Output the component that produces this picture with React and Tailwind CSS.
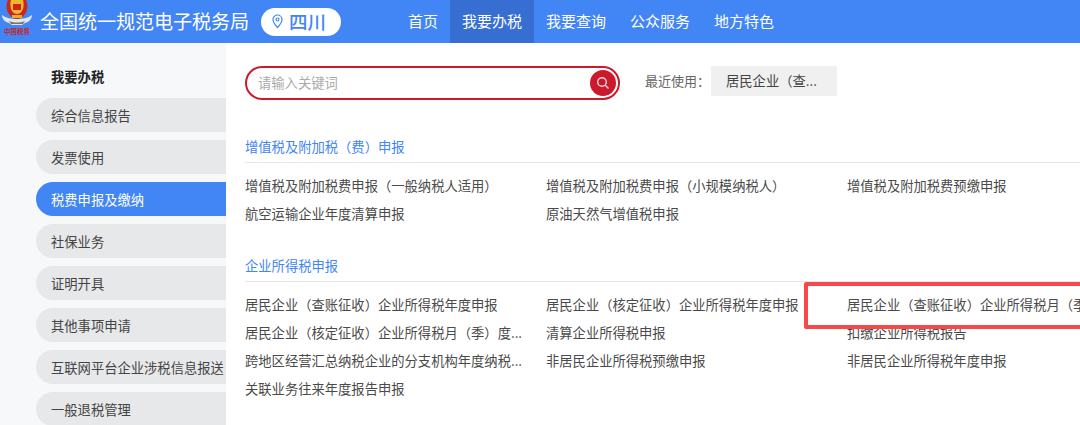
const font = "font-['Noto_Sans_CJK_SC','Noto_Sans',sans-serif]"

const navItems = ['首页', '我要办税', '我要查询', '公众服务', '地方特色']
const sideItems = ['综合信息报告', '发票使用', '税费申报及缴纳', '社保业务', '证明开具', '其他事项申请', '互联网平台企业涉税信息报送', '一般退税管理']

const sections = [
  {
    title: '增值税及附加税（费）申报',
    links: [
      '增值税及附加税费申报（一般纳税人适用）',
      '增值税及附加税费申报（小规模纳税人）',
      '增值税及附加税费预缴申报',
      '航空运输企业年度清算申报',
      '原油天然气增值税申报',
    ],
  },
  {
    title: '企业所得税申报',
    links: [
      '居民企业（查账征收）企业所得税年度申报',
      '居民企业（核定征收）企业所得税年度申报',
      '居民企业（查账征收）企业所得税月（季）度申报',
      '居民企业（核定征收）企业所得税月（季）度...',
      '清算企业所得税申报',
      '扣缴企业所得税报告',
      '跨地区经营汇总纳税企业的分支机构年度纳税...',
      '非居民企业所得税预缴申报',
      '非居民企业所得税年度申报',
      '关联业务往来年度报告申报',
    ],
  },
]

function Emblem() {
  return (
    <svg width="32" height="27" viewBox="0 0 32 27" className="block">
      {/* wings */}
      <path d="M1 15c4 3 9 4 15 4s11-1 15-4c0 4-3 7-7 8l-3 2H11l-3-2c-4-1-7-4-7-8z" fill="#e4e6e4" />
      <path d="M8 21c5 2 11 2 16 0l-2 3H10z" fill="#6f7478" />
      {/* red shield */}
      <path d="M7 0h18c2 4 2 10-1 14-2 3-5 5-8 5s-6-2-8-5C5 10 5 4 7 0z" fill="#c9261c" />
      <path d="M10 0h12c1 3 1 8-1 11-1 2-3 3-5 3s-4-1-5-3C9 8 9 3 10 0z" fill="#efb52f" />
      <rect x="12" y="4" width="8" height="6" fill="#c9261c" />
      <rect x="11" y="15" width="10" height="3" fill="#e6ae2e" />
    </svg>
  )
}

function App() {
  return (
    <div className={`relative h-[425px] w-[1080px] overflow-hidden bg-white ${font}`}>
      <header className="flex h-[43px] items-center bg-[#4285f4]">
        <div className="ml-[1px] flex h-full w-[39px] flex-col self-start">
          <Emblem />
          <div className="ml-[3px] mt-[1px] whitespace-nowrap text-[6.500px] font-bold leading-[7px] text-[#c9261c]">中国税务</div>
        </div>
        <div className="text-[19.100px] leading-none tracking-[-0.1px] text-white">全国统一规范电子税务局</div>
        <div className="ml-[12px] flex h-[28px] w-[80px] items-center rounded-full bg-white pl-[10px] text-[#4285f4]">
          <svg width="13" height="15" viewBox="0 0 13 15" fill="none" stroke="currentColor" strokeWidth="1.200">
            <path d="M6.500 1a4.500 4.500 0 0 1 4.500 4.500c0 3.200-4.500 8-4.500 8S2 8.700 2 5.500A4.500 4.500 0 0 1 6.500 1z" />
            <circle cx="6.500" cy="5.500" r="1.500" />
          </svg>
          <span className="ml-[5px] text-[18.500px] font-medium leading-none">四川</span>
        </div>
        <nav className="ml-[55px] flex h-full">
          {navItems.map((item) => (
            <div key={item} className={`flex h-full items-center px-[12px] text-[15px] text-white ${item === '我要办税' ? 'bg-[#366fd1]' : ''}`}>
              {item}
            </div>
          ))}
        </nav>
      </header>

      <div className="flex h-[382px]">
        <aside className="w-[226px] shrink-0 bg-[#f7f8fa] pl-[36px] pt-[25px]">
          <div className="pl-[15px] text-[13.300px] font-bold leading-[18px] text-[#222]">我要办税</div>
          <ul className="mt-[12px] flex flex-col gap-[8px]">
            {sideItems.map((item) => (
              <li
                key={item}
                className={`flex h-[34px] items-center whitespace-nowrap rounded-l-full pl-[15px] pt-px text-[13.300px] ${item === '税费申报及缴纳' ? 'bg-[#4285f4] text-white' : 'bg-[#e7e8ea] text-[#444]'}`}
              >
                {item}
              </li>
            ))}
          </ul>
        </aside>

        <main className="min-w-0 flex-1 overflow-hidden pl-[19px] pt-[23px]">
          <div className="flex h-[34px] items-center">
            <div className="flex h-[34px] w-[375px] items-center justify-between rounded-full border-2 border-[#cc1a2c] pl-[11px] pr-[2px]">
              <span className="text-[13.300px] leading-none text-[#aaa]">请输入关键词</span>
              <span className="flex h-[26px] w-[26px] items-center justify-center rounded-full bg-[#cc1a2c]">
                <svg width="14" height="14" viewBox="0 0 14 14" fill="none" stroke="#f5d5d8" strokeWidth="1.400">
                  <circle cx="6" cy="6" r="4.300" />
                  <path d="M9.200 9.200 12.500 12.500" />
                </svg>
              </span>
            </div>
            <span className="mb-[5px] ml-[25px] text-[13px] leading-none text-[#666]">最近使用：</span>
            <span className="mb-[4px] ml-[1px] flex h-[30px] w-[126px] items-center bg-[#f0f0f0] pl-[15px] text-[13.300px] text-[#444]">居民企业（查...</span>
          </div>

          <div className="mt-[38px] flex flex-col gap-[28px]">
            {sections.map((section) => (
              <section key={section.title}>
                <h2 className="border-b border-[#e8e8e8] pb-[6px] text-[13.300px] font-normal leading-[18px] text-[#4285f4]">{section.title}</h2>
                <div className="mt-[9px] grid w-[903px] grid-cols-[301px_301px_301px]">
                  {section.links.map((link) => (
                    <div key={link} className="h-[28.300px] whitespace-nowrap text-[13.300px] leading-[28px] text-[#4a4a4a]">{link}</div>
                  ))}
                </div>
              </section>
            ))}
          </div>
        </main>
      </div>

      <div className="absolute left-[804px] top-[282px] h-[47px] w-[290px] rounded-[2px] border-[4px] border-[#f9484a]" />
    </div>
  )
}

export default App
